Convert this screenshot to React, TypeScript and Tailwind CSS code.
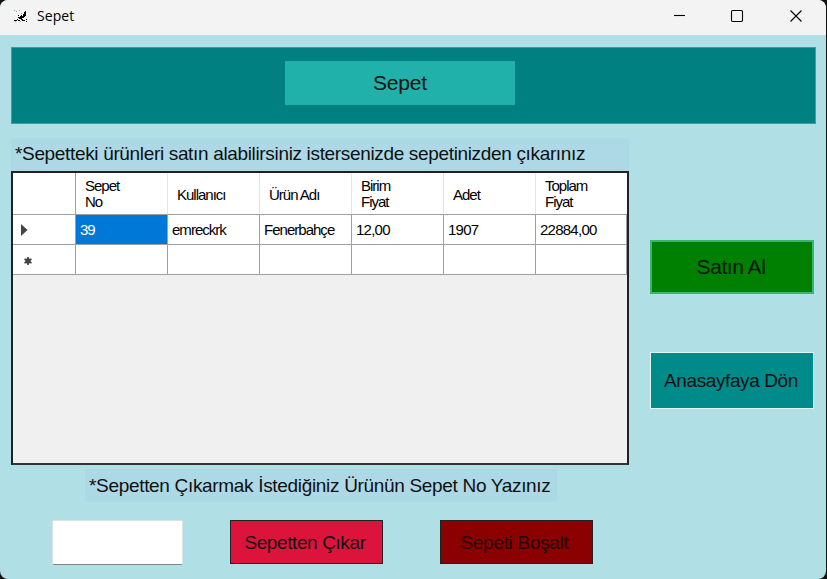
import React from 'react';

const columns = ['Sepet\nNo', 'Kullanıcı', 'Ürün Adı', 'Birim\nFiyat', 'Adet', 'Toplam\nFiyat'];
const values = ['39', 'emreckrk', 'Fenerbahçe', '12,00', '1907', '22884,00'];
const gridCols = 'grid grid-cols-[63px_92px_92px_92px_92px_92px_91px]';

function AppIcon() {
  return (
    <svg width="14" height="14" viewBox="0 0 14 14" shapeRendering="crispEdges" fill="#000">
      <path d="M11 2h1v5h-1v1h-1v1H8v1H5V9H4V8h2V7h1V6h1v1h1V5h1V3h1z" />
      <path d="M4 6h1v1H4zM0 11h3v1H0zM4 11h2v1H4zM7 10h2v1H7zM8 11h3v1H8zM12 10h1v1h-1zM12 12h1v1h-1zM3 10h1v1H3z" />
      <path fill="#999" d="M0 1h1v1H0zM2 2h1v1H2zM5 1h1v1H5zM7 4h1v1H7zM1 12h1v1H1zM6 12h1v1H6z" />
    </svg>
  );
}

function TitleBar() {
  return (
    <header className="flex h-[35px] shrink-0 items-center bg-[#f3f3f3] pb-[3px] pl-[14px]">
      <AppIcon />
      <h1 className="ml-[9px] grow pb-px font-['Open_Sans',sans-serif] text-[14px] tracking-[0.05px] text-black">Sepet</h1>
      <svg width="152" height="32" viewBox="0 0 152 32" fill="none" stroke="#000" strokeWidth="1.1">
        <path d="M-1 15.5h12" />
        <rect x="57.5" y="10.5" width="11" height="11" rx="1.2" />
        <path d="M116.5 10.5l11 11M127.5 10.5l-11 11" />
      </svg>
    </header>
  );
}

function CartGrid() {
  return (
    <div className="h-[294px] border-2 border-[#222] border-b-[#333] bg-[#f0f0f0] text-[15px] leading-[16px] text-black">
      <div className={`${gridCols} h-[42px] border-b border-[#a0a0a0] bg-white`}>
        <div className="border-r border-[#a0a0a0]" />
        {columns.map((c) => (
          <div key={c} className={`flex items-center whitespace-pre border-r border-[#e5e5e5] pl-[9px] tracking-[-1px] last:border-r-0 ${c.includes('\n') ? 'pt-0' : 'pt-[2px]'}`}>
            {c}
          </div>
        ))}
      </div>
      <div className={`${gridCols} h-[30px] border-b border-[#a0a0a0] bg-white`}>
        <div className="flex items-center border-r border-[#a0a0a0] pl-2 pt-px">
          <svg width="7" height="12" viewBox="0 0 7 12"><path d="M0 0l6.5 6L0 12z" fill="#444" /></svg>
        </div>
        {values.map((v) => (
          <div key={v} className="flex items-center border-r border-[#a0a0a0] pl-[4px] pt-px tracking-[-0.98px] nth-2:bg-[#0078d7] nth-2:text-white nth-[n+5]:tracking-[-0.75px]">
            {v}
          </div>
        ))}
      </div>
      <div className={`${gridCols} h-[30px] border-b border-[#a0a0a0] bg-white`}>
        <div className="flex items-center border-r border-[#a0a0a0] pl-[11px] pt-[2px]">
          <svg width="8" height="8" viewBox="0 0 8 8" stroke="#444" strokeWidth="1.7"><circle cx="4" cy="4" r="1.8" fill="#444" /><path d="M4 0v8M0.5 2l7 4M0.5 6l7-4" /></svg>
        </div>
        {values.map((v) => (
          <div key={v} className="border-r border-[#a0a0a0]" />
        ))}
      </div>
    </div>
  );
}

export default function App() {
  return (
    <div className="h-[579px] w-[827px] bg-[#111] pr-px font-['Liberation_Sans',Arial,sans-serif] text-[#101010]">
      <div className="flex h-full w-full flex-col overflow-hidden rounded-[8px] bg-[#b0e0e6]">
        <TitleBar />
        <div className="ml-[11px] mt-[12px] flex h-[77px] w-[805px] shrink-0 items-start justify-center border border-[#3b9fa1] bg-[#008080] pr-[27px] pt-[13px]">
          <div className="flex h-[44px] w-[230px] items-center justify-center bg-[#20b2aa] text-[21px] tracking-[-0.2px]">Sepet</div>
        </div>
        <main className="ml-[11px] mt-[14px] flex">
          <section className="w-[618px]">
            <p className="flex h-[33px] items-center whitespace-nowrap bg-[#add8e6] pb-px pl-[4px] text-[19px] tracking-[-0.34px]">
              *Sepetteki ürünleri satın alabilirsiniz istersenizde sepetinizden çıkarınız
            </p>
            <CartGrid />
            <p className="ml-[74px] mt-[4px] flex h-[33px] w-[472px] items-center whitespace-nowrap bg-[#add8e6] pl-[4px] pt-[2px] text-[19px] tracking-[-0.32px]">
              *Sepetten Çıkarmak İstediğiniz Ürünün Sepet No Yazınız
            </p>
            <div className="ml-[41px] mt-[18px] flex items-start text-[19px] tracking-[-0.4px]">
              <input aria-label="Sepet No" className="h-[45px] w-[131px] rounded-[2px] border border-[#d8e4e6] border-b-[#868686] bg-white px-2 outline-none" />
              <button className="ml-[47px] h-[44px] w-[153px] whitespace-nowrap border border-[#222] bg-[#dc143c] pr-[3px] pt-[3px]">Sepetten Çıkar</button>
              <button className="ml-[57px] h-[44px] w-[153px] whitespace-nowrap border border-[#222] bg-[#8b0000] pr-[4px] pt-[3px] tracking-[-0.3px] text-[#240000]">Sepeti Boşalt</button>
            </div>
          </section>
          <aside className="ml-[21px] mt-[102px] flex w-[164px] flex-col">
            <button className="h-[54px] border-2 border-[#3cb371] bg-[#008000] pr-[2px] text-[21px] tracking-[-0.45px] text-[#001500]">Satın Al</button>
            <button className="mt-[58px] h-[57px] whitespace-nowrap border border-[#e0f8f0] bg-[#008b8b] pr-[2px] pt-[2px] text-[19px] tracking-[-0.4px]">Anasayfaya Dön</button>
          </aside>
        </main>
      </div>
    </div>
  );
}
